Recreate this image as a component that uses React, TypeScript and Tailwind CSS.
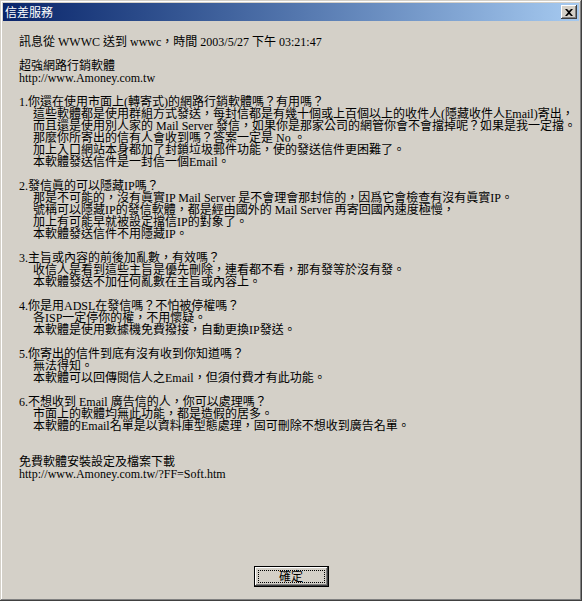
import React from 'react'

type Line = { text: string; indent?: boolean }

const font = '"Liberation Serif", "Noto Sans CJK TC", serif'

const lines: Line[] = [
  { text: '訊息從 WWWC 送到 wwwc，時間 2003/5/27 下午 03:21:47' },
  { text: '' },
  { text: '超強網路行銷軟體' },
  { text: 'http://www.Amoney.com.tw' },
  { text: '' },
  { text: '1.你還在使用市面上(轉寄式)的網路行銷軟體嗎？有用嗎？' },
  { text: '這些軟體都是使用群組方式發送，每封信都是有幾十個或上百個以上的收件人(隱藏收件人Email)寄出，', indent: true },
  { text: '而且還是使用別人家的 Mail Server 發信，如果你是那家公司的網管你會不會擋掉呢？如果是我一定擋。', indent: true },
  { text: '那麼你所寄出的信有人會收到嗎？答案一定是 No 。', indent: true },
  { text: '加上入口網站本身都加了封鎖垃圾郵件功能，使的發送信件更困難了。', indent: true },
  { text: '本軟體發送信件是一封信一個Email。', indent: true },
  { text: '' },
  { text: '2.發信眞的可以隱藏IP嗎？' },
  { text: '那是不可能的，沒有眞實IP Mail Server 是不會理會那封信的，因爲它會檢查有沒有眞實IP。', indent: true },
  { text: '號稱可以隱藏IP的發信軟體，都是經由國外的 Mail Server 再寄回國內速度極慢，', indent: true },
  { text: '加上有可能早就被設定擋信IP的對象了。', indent: true },
  { text: '本軟體發送信件不用隱藏IP。', indent: true },
  { text: '' },
  { text: '3.主旨或內容的前後加亂數，有效嗎？' },
  { text: '收信人是看到這些主旨是優先刪除，連看都不看，那有發等於沒有發。', indent: true },
  { text: '本軟體發送不加任何亂數在主旨或內容上。', indent: true },
  { text: '' },
  { text: '4.你是用ADSL在發信嗎？不怕被停權嗎？' },
  { text: '各ISP一定停你的權，不用懷疑。', indent: true },
  { text: '本軟體是使用數據機免費撥接，自動更換IP發送。', indent: true },
  { text: '' },
  { text: '5.你寄出的信件到底有沒有收到你知道嗎？' },
  { text: '無法得知。', indent: true },
  { text: '本軟體可以回傳閱信人之Email，但須付費才有此功能。', indent: true },
  { text: '' },
  { text: '6.不想收到 Email 廣告信的人，你可以處理嗎？' },
  { text: '市面上的軟體均無此功能，都是造假的居多。', indent: true },
  { text: '本軟體的Email名單是以資料庫型態處理，固可刪除不想收到廣告名單。', indent: true },
  { text: '' },
  { text: '' },
  { text: '免費軟體安裝設定及檔案下載' },
  { text: 'http://www.Amoney.com.tw/?FF=Soft.htm' },
]

function CloseButton() {
  return (
    <div className="w-[16px] h-[14px] bg-[#d4d0c8] shadow-[inset_-1px_-1px_#404040,inset_1px_1px_#ffffff,inset_-2px_-2px_#808080] flex items-center justify-center">
      <svg width="8" height="7" viewBox="0 0 8 7">
        <path d="M0 0h2l2 2 2-2h2L5 3.5 8 7H6L4 5 2 7H0l3-3.5z" fill="#000" />
      </svg>
    </div>
  )
}

export default function App() {
  return (
    <div
      className="w-[582px] h-[601px] bg-[#d4d0c8] p-[3px] flex flex-col shadow-[inset_-1px_-1px_#404040,inset_1px_1px_#d4d0c8,inset_-2px_-2px_#808080,inset_2px_2px_#ffffff]"
      style={{ fontFamily: font }}
    >
      {/* title bar */}
      <div className="h-[18px] bg-gradient-to-r from-[#0a246a] to-[#a6caf0] flex items-center justify-between pl-[2px] pr-[2px]">
        <span className="text-white text-[12px] leading-[12px]" style={{ fontFamily: '"Noto Sans CJK TC", sans-serif' }}>
          信差服務
        </span>
        <CloseButton />
      </div>

      {/* message body */}
      <div className="flex-1 flex flex-col pl-[16px] pt-[15px]">
        <div className="text-black text-[12px] leading-[12px]">
          {lines.map((line, i) => (
            <div key={i} className={`h-[12px] whitespace-nowrap ${line.indent ? 'pl-[14px]' : ''}`}>
              {line.text}
            </div>
          ))}
        </div>

        <div className="mt-auto mb-[11px] flex justify-center pr-[16px]">
          <div className="w-[75px] h-[21px] border border-black bg-[#d4d0c8] shadow-[inset_-1px_-1px_#404040,inset_1px_1px_#ffffff,inset_-2px_-2px_#808080] flex items-center justify-center p-[3px]">
            <div className="w-full h-full border border-dotted border-black flex items-center justify-center text-[12px] leading-[12px] text-black">
              確定
            </div>
          </div>
        </div>
      </div>
    </div>
  )
}
